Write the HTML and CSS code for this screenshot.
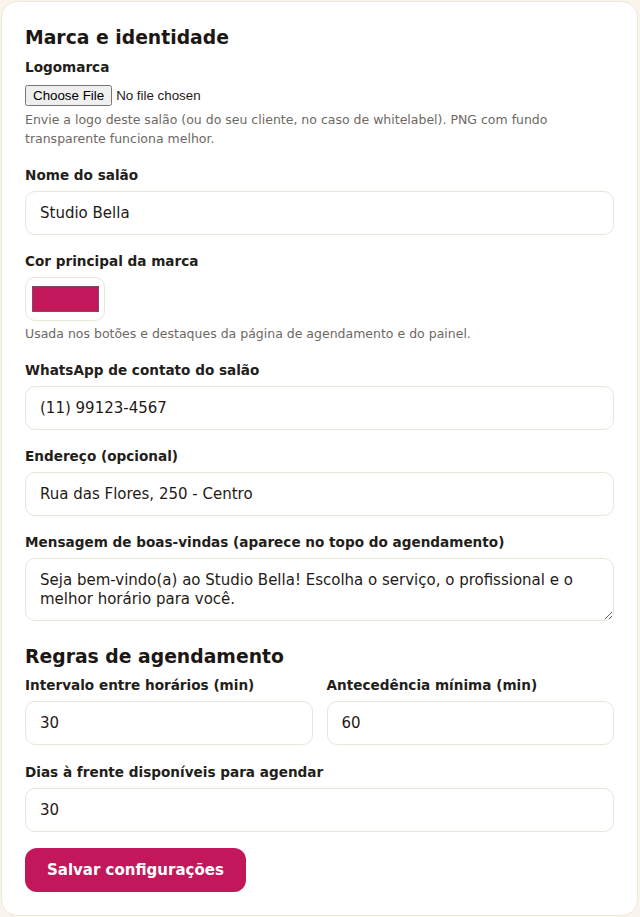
FILE: index.html
```html
<!DOCTYPE html>
<html lang="pt-BR">
<head>
<meta charset="utf-8">
<title>Configurações</title>
<link rel="stylesheet" href="styles.css">
</head>
<body>
<form class="card">
  <h2 class="title">Marca e identidade</h2>

  <div class="field field-logo">
    <label class="label">Logomarca</label>
    <input class="file" type="file">
    <p class="help">Envie a logo deste salão (ou do seu cliente, no caso de whitelabel). PNG com fundo transparente funciona melhor.</p>
  </div>

  <div class="field">
    <label class="label">Nome do salão</label>
    <input class="input" type="text" value="Studio Bella">
  </div>

  <div class="field">
    <label class="label">Cor principal da marca</label>
    <input class="color" type="color" value="#c2185b">
    <p class="help">Usada nos botões e destaques da página de agendamento e do painel.</p>
  </div>

  <div class="field">
    <label class="label">WhatsApp de contato do salão</label>
    <input class="input" type="text" value="(11) 99123-4567">
  </div>

  <div class="field">
    <label class="label">Endereço (opcional)</label>
    <input class="input" type="text" value="Rua das Flores, 250 - Centro">
  </div>

  <div class="field">
    <label class="label">Mensagem de boas-vindas (aparece no topo do agendamento)</label>
    <textarea class="input textarea" rows="2">Seja bem-vindo(a) ao Studio Bella! Escolha o serviço, o profissional e o melhor horário para você.</textarea>
  </div>

  <h2 class="title section">Regras de agendamento</h2>

  <div class="row">
    <div class="field">
      <label class="label">Intervalo entre horários (min)</label>
      <input class="input" type="number" value="30">
    </div>
    <div class="field">
      <label class="label">Antecedência mínima (min)</label>
      <input class="input" type="number" value="60">
    </div>
  </div>

  <div class="field">
    <label class="label">Dias à frente disponíveis para agendar</label>
    <input class="input" type="number" value="30">
  </div>

  <button class="btn" type="button">Salvar configurações</button>
</form>
</body>
</html>
```

FILE: styles.css
```css
html, body {
  margin: 0;
  padding: 0;
  background: #f9f4ec;
}
body {
  padding: 1px 2px 1px 1px;
  font-family: "DejaVu Sans", Verdana, sans-serif;
  color: #1f1a17;
}
.card {
  background: #ffffff;
  border: 1px solid #efe7da;
  border-radius: 16px;
  padding: 24px 23px 23px 23px;
  margin: 0;
  min-height: 866px;
}
.title {
  margin: 0 0 8px 0;
  font-size: 18.8px;
  line-height: 23px;
  font-weight: bold;
  color: #1c1714;
}
.title.section {
  margin-top: 24px;
  margin-bottom: 7px;
}
.field {
  margin-bottom: 16px;
}
.label {
  display: block;
  font-size: 13.6px;
  line-height: 20px;
  font-weight: bold;
  color: #231e1a;
  margin-bottom: 6px;
}
.file {
  display: block;
  margin: 8px 0 0 0;
}
.help {
  margin: 4px 0 0 0;
  padding-bottom: 1px;
  font-size: 12.5px;
  line-height: 18px;
  color: #6e6862;
}
.field-logo .help {
  margin-top: 5px;
  line-height: 18.5px;
}
.input {
  display: block;
  box-sizing: border-box;
  width: 100%;
  height: 44px;
  margin: 0;
  padding: 12px 14px;
  font-family: "DejaVu Sans", Verdana, sans-serif;
  font-size: 15px;
  line-height: 18px;
  color: #1f1a17;
  background: #ffffff;
  border: 1px solid #ebe4d8;
  border-radius: 10px;
  outline: none;
}
.input[type=number] {
  -moz-appearance: textfield;
}
.input::-webkit-outer-spin-button,
.input::-webkit-inner-spin-button {
  -webkit-appearance: none;
  margin: 0;
}
.textarea {
  resize: vertical;
  height: 63px;
  padding: 12px 14px 10px 14px;
  line-height: 19px;
}
.color {
  display: block;
  width: 80px;
  height: 44px;
  margin: 0;
  padding: 0;
  box-sizing: border-box;
  background: #ffffff;
  border: 1px solid #ebe4d8;
  border-radius: 10px;
  cursor: pointer;
  -webkit-appearance: none;
  appearance: none;
}
.color::-webkit-color-swatch-wrapper {
  padding: 8px 5px 8px 6px;
}
.color::-webkit-color-swatch {
  border: 1px solid #7d4e62;
  border-radius: 0;
}
.row {
  display: grid;
  grid-template-columns: 1fr 1fr;
  column-gap: 14px;
  padding-bottom: 1px;
}
.btn {
  display: block;
  margin: 1px 0 0 0;
  padding: 0 22px;
  height: 44px;
  border: none;
  border-radius: 12px;
  background: #c2185b;
  color: #ffffff;
  font-family: "DejaVu Sans", Verdana, sans-serif;
  font-size: 15px;
  font-weight: bold;
  cursor: pointer;
}
```
